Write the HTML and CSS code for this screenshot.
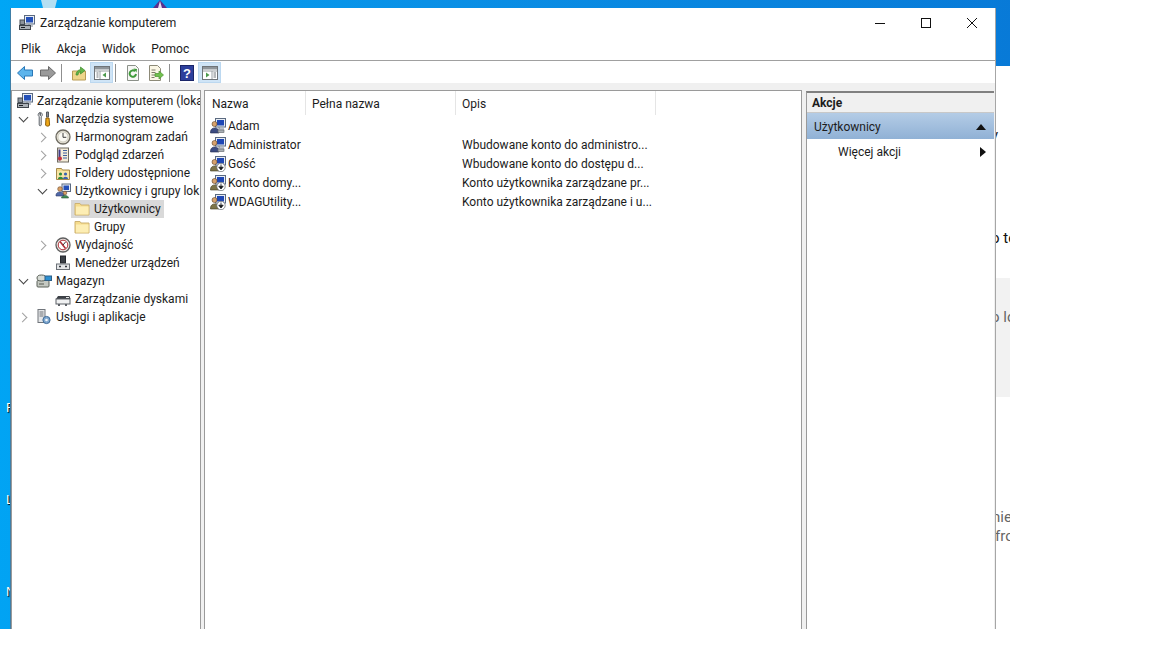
FILE: index.html
```html
<!DOCTYPE html>
<html lang="pl">

<head>
    <meta charset="UTF-8">
    <meta name="viewport" content="width=device-width, initial-scale=1.0">
    <title>Zarządzanie komputerem</title>

    <link rel="stylesheet" href="styles.css">
</head>

<body>
    <svg class="defs" width="0" height="0">
        <symbol id="i-computer" viewBox="0 0 16 16">
            <rect x="5.5" y="0.5" width="10" height="8.5" fill="#e8edf4" stroke="#5b6a80" />
            <rect x="7" y="2" width="7" height="5.5" fill="#2450b8" />
            <path d="M10 9v2h4" fill="none" stroke="#7a8494" />
            <rect x="1" y="5" width="4.5" height="4.5" fill="#8d949c" stroke="#454c55" />
            <rect x="0.5" y="10.5" width="11" height="4" fill="#aab0b6" stroke="#3e444b" />
            <path d="M2 12.5h4" stroke="#1c2026" />
        </symbol>
        <symbol id="i-tools" viewBox="0 0 16 16">
            <path d="M4 1.5c-2 .5-2.5 3-.8 4.2V14c0 1 2 1 2 0V5.7C7 4.5 6.500 2 4.600 1.500v3h-.6z" fill="#f0f1f2" stroke="#5c6167" />
            <path d="M10.500 1h2v5h-2z" fill="#8a8f96" stroke="#55595f" />
            <path d="M10 7h3l.6 7c0 1.500-4 1.500-4 0z" fill="#f0a818" stroke="#8a5c08" />
        </symbol>
        <symbol id="i-clock" viewBox="0 0 16 16">
            <circle cx="8" cy="8" r="7" fill="#e6e3d8" stroke="#6d6a60" stroke-width="1.3" />
            <circle cx="8" cy="8" r="5" fill="#fbfaf4" stroke="#b9b5a5" stroke-width=".6" />
            <path d="M8 4v4.300h3.300" fill="none" stroke="#3e3e3e" />
        </symbol>
        <symbol id="i-log" viewBox="0 0 16 16">
            <rect x="2.5" y="1" width="11" height="14" fill="#f4ecd8" stroke="#6f6a60" />
            <path d="M8 3.500h4M8 6h4M8 8.500h4M8 11h4" stroke="#4060a0" />
            <path d="M4.500 2.500v11" stroke="#403c8a" stroke-width="2" />
            <circle cx="5" cy="11.5" r="2" fill="#c4303a" />
        </symbol>
        <symbol id="i-shared" viewBox="0 0 16 16">
            <path d="M1.500 3.500h5l1 1.500h7v9.500h-13z" fill="#f2d98a" stroke="#a5894a" />
            <rect x="2" y="6" width="12" height="8" fill="#f7e5a5" />
            <circle cx="5.5" cy="9" r="1.6" fill="#2f8a3a" />
            <path d="M3 14c0-3 5-3 5 0z" fill="#2f8a3a" />
            <circle cx="10.5" cy="9" r="1.6" fill="#3a62b0" />
            <path d="M8 14c0-3 5-3 5 0z" fill="#3a62b0" />
        </symbol>
        <symbol id="i-groups" viewBox="0 0 16 16">
            <rect x="7" y="1" width="8.5" height="7.5" fill="#e8edf4" stroke="#5b6a80" />
            <rect x="8.5" y="2.5" width="5.5" height="4.5" fill="#2450b8" />
            <circle cx="5" cy="6" r="2.3" fill="#d9a066" stroke="#6e4a28" stroke-width=".6" />
            <path d="M1 12c0-4 8-4 8 0v1H1z" fill="#5068a8" stroke="#2c3a68" stroke-width=".6" />
            <circle cx="10" cy="10" r="1.8" fill="#d9a066" stroke="#6e4a28" stroke-width=".6" />
            <path d="M6.500 15c0-3.500 7-3.500 7 0z" fill="#3f8a52" stroke="#28563a" stroke-width=".6" />
        </symbol>
        <symbol id="i-folder" viewBox="0 0 16 16">
            <path d="M1 2.500h5l1 1.500h8v10H1z" fill="#f6dc8c" stroke="#cdb272" />
            <path d="M2 5.500h12.500v8H2z" fill="#fdeeb4" />
        </symbol>
        <symbol id="i-perf" viewBox="0 0 16 16">
            <circle cx="8" cy="8" r="7" fill="#eceae6" stroke="#5f5f5f" stroke-width="1.3" />
            <circle cx="8" cy="8" r="4.8" fill="#fff" stroke="#b03038" />
            <path d="M5 4.500l5.500 7" stroke="#b03038" stroke-width="1.6" />
            <path d="M8 8l2.500-3" stroke="#333" />
        </symbol>
        <symbol id="i-device" viewBox="0 0 16 16">
            <rect x="5.5" y="1" width="5" height="7" fill="#3a3f46" stroke="#24272c" />
            <rect x="1.5" y="9" width="13" height="5.5" fill="#e4e6e8" stroke="#6b7076" />
            <path d="M4 11.500h2M10 11.500h2" stroke="#33373c" stroke-width="1.5" />
        </symbol>
        <symbol id="i-storage" viewBox="0 0 16 16">
            <rect x="1" y="7.5" width="12" height="6.5" rx="1" fill="#c5c9c2" stroke="#5a6058" />
            <ellipse cx="5.5" cy="5" rx="4.5" ry="3" fill="#d7dbd5" stroke="#5a6058" />
            <rect x="9" y="3" width="6.5" height="4.5" fill="#2d8fd0" stroke="#2c5f88" />
            <path d="M3 11h5" stroke="#54594f" />
        </symbol>
        <symbol id="i-disk" viewBox="0 0 16 16">
            <path d="M1 8l2-3h11.500l1 3z" fill="#3c4046" />
            <rect x="1" y="8" width="14" height="5" fill="#f0f1f2" stroke="#5d6167" />
            <path d="M4 13v2M11 13v2" stroke="#5d6167" stroke-width="2" />
            <path d="M11 6.500h3" stroke="#e8e8e8" />
        </symbol>
        <symbol id="i-services" viewBox="0 0 16 16">
            <rect x="2" y="0.5" width="7" height="13" fill="#e4e6e8" stroke="#70757b" />
            <path d="M3.500 3h4M3.500 5h4M3.500 7h4" stroke="#70757b" />
            <circle cx="10.5" cy="11" r="3.6" fill="#7fa8d0" stroke="#3d6a98" />
            <circle cx="10.5" cy="11" r="1.3" fill="#f4f6f8" />
        </symbol>
        <symbol id="i-user" viewBox="0 0 16 16">
            <rect x="5.5" y="0.5" width="10" height="8.5" fill="#e8edf4" stroke="#5b6a80" />
            <rect x="7" y="2" width="7" height="5.5" fill="#1f47b4" />
            <path d="M9 9v2h5" fill="none" stroke="#7a8494" />
            <circle cx="4.5" cy="6" r="2.5" fill="#d6a16c" stroke="#5e4226" stroke-width=".6" />
            <path d="M.5 14c0-5.500 8.500-5.500 8.500 0v1H.5z" fill="#3c4c82" stroke="#20294e" stroke-width=".6" />
            <rect x="8" y="12" width="6" height="2.5" fill="#aab0b6" stroke="#5d6167" stroke-width=".6" />
        </symbol>
        <symbol id="i-user-off" viewBox="0 0 16 16">
            <rect x="5.5" y="0.5" width="10" height="8.5" fill="#e8edf4" stroke="#5b6a80" />
            <rect x="7" y="2" width="7" height="5.5" fill="#1f47b4" />
            <circle cx="4.5" cy="6" r="2.5" fill="#d6a16c" stroke="#5e4226" stroke-width=".6" />
            <path d="M.5 14c0-5.500 8.500-5.500 8.500 0v1H.5z" fill="#7d7448" stroke="#3f3a20" stroke-width=".6" />
            <circle cx="11" cy="11.5" r="4.2" fill="#fff" stroke="#5d6167" stroke-width=".7" />
            <path d="M11 8.500v4M8.800 11.200l2.200 2.800 2.200-2.800z" fill="#17191c" stroke="#17191c" stroke-width=".8" />
        </symbol>
    </svg>

    <div class="desktop">
        <svg class="desk-icon bin" viewBox="0 0 18 8"><path d="M1 0h16l-2 8H3z" fill="#b4dff2" /></svg>
        <svg class="desk-icon orb" viewBox="0 0 20 8"><path d="M10 0l7 8H3z" fill="#5b2f8a" /><path d="M10 1l2 7H8z" fill="#e6e0f0" /></svg>
        <span class="desk-label label-f">F</span>
        <span class="desk-label label-l">L</span>
        <span class="desk-label label-n">N</span>
    </div>

    <div class="back-window">
        <p class="frag frag-y">y</p>
        <p class="frag frag-te">o te</p>
        <div class="grey-block"><p class="frag frag-lo">o lo</p></div>
        <p class="frag frag-nie">nie</p>
        <p class="frag frag-fro">fro</p>
    </div>

    <div class="window">
        <div class="titlebar">
            <svg class="icon title-icon"><use href="#i-computer" /></svg>
            <span class="title-text">Zarządzanie komputerem</span>
            <div class="caption">
                <svg class="cap-btn" viewBox="0 0 46 30"><path d="M18 15.500h10" stroke="#111" /></svg>
                <svg class="cap-btn" viewBox="0 0 46 30"><rect x="18.5" y="10.5" width="9" height="9" fill="none" stroke="#111" /></svg>
                <svg class="cap-btn" viewBox="0 0 46 30"><path d="M18 10l10 10M28 10l-10 10" stroke="#111" /></svg>
            </div>
        </div>

        <div class="menubar">
            <span>Plik</span>
            <span>Akcja</span>
            <span>Widok</span>
            <span>Pomoc</span>
        </div>

        <div class="toolbar">
            <div class="tool">
                <svg class="icon" viewBox="0 0 16 16"><path d="M.5 8L7.500 1.500V5h8v6h-8v3.500z" fill="#5cb4ec" stroke="#2a78b8" /></svg>
            </div>
            <div class="tool">
                <svg class="icon" viewBox="0 0 16 16"><path d="M15.500 8L8.500 1.500V5h-8v6h8v3.500z" fill="#9a9a9a" stroke="#6a6a6a" /></svg>
            </div>
            <div class="sep"></div>
            <div class="tool">
                <svg class="icon" viewBox="0 0 16 16">
                    <path d="M1.500 6h13v9h-13z" fill="#efd58a" stroke="#b99c55" />
                    <path d="M5 10c0-3 2-5 4.500-5.500V2L14 5.500 9.500 9V6.500C8 7 7 8.500 7 10z" fill="#62b548" stroke="#3d8a2c" stroke-width=".7" />
                </svg>
            </div>
            <div class="tool on">
                <svg class="icon" viewBox="0 0 16 16">
                    <rect x=".5" y="1.5" width="15" height="13" fill="#fff" stroke="#6f7478" />
                    <path d="M1 2h14v2.500H1z" fill="#8f959a" />
                    <path d="M1 6h14M6 6v8" stroke="#9aa0a4" />
                    <path d="M2.500 8h2M2.500 10h2M2.500 12h2" stroke="#6f7478" />
                    <path d="M12 7.500v5L8.500 10z" fill="#4c9a4c" />
                </svg>
            </div>
            <div class="sep"></div>
            <div class="tool">
                <svg class="icon" viewBox="0 0 16 16">
                    <path d="M2.500.5h8l3 3v12h-11z" fill="#f6f7f4" stroke="#8b9089" />
                    <path d="M11 9a3.200 3.200 0 1 1-1-2.800" fill="none" stroke="#3f9a3a" stroke-width="2" />
                    <path d="M8.500 3.500l3.500.5-.5 3.500z" fill="#3f9a3a" />
                </svg>
            </div>
            <div class="tool">
                <svg class="icon" viewBox="0 0 16 16">
                    <path d="M1.500.5h8l3 3v12h-11z" fill="#fbf7e6" stroke="#8d8a78" />
                    <path d="M3.500 5h4M3.500 7.500h4M3.500 10h4M3.500 12.500h3" stroke="#7d7a68" />
                    <path d="M7 8.500h4V6l4.500 4-4.500 4v-2.500H7z" fill="#72c04e" stroke="#4b9430" stroke-width=".7" />
                </svg>
            </div>
            <div class="sep"></div>
            <div class="tool">
                <svg class="icon" viewBox="0 0 16 16">
                    <rect x="1.5" y="0.5" width="13" height="15" fill="#2d3f9c" stroke="#1a2568" />
                    <text x="8" y="13" text-anchor="middle" class="help-mark">?</text>
                </svg>
            </div>
            <div class="tool on">
                <svg class="icon" viewBox="0 0 16 16">
                    <rect x=".5" y="1.5" width="15" height="13" fill="#fff" stroke="#6f7478" />
                    <path d="M1 2h14v2.500H1z" fill="#8f959a" />
                    <path d="M1 6h14M10 6v8" stroke="#9aa0a4" />
                    <path d="M11.500 8h2.500M11.500 10h2.500M11.500 12h2.500" stroke="#6f7478" />
                    <path d="M4 7.500v5L7.500 10z" fill="#4c9a4c" />
                </svg>
            </div>
        </div>

        <div class="panes">
            <div class="pane tree">
                <div class="tree-row"><svg class="icon"><use href="#i-computer" /></svg><span class="lbl">Zarządzanie komputerem (loka</span></div>
                <div class="tree-row lv1"><i class="chev open"></i><svg class="icon"><use href="#i-tools" /></svg><span class="lbl">Narzędzia systemowe</span></div>
                <div class="tree-row lv2"><i class="chev"></i><svg class="icon"><use href="#i-clock" /></svg><span class="lbl">Harmonogram zadań</span></div>
                <div class="tree-row lv2"><i class="chev"></i><svg class="icon"><use href="#i-log" /></svg><span class="lbl">Podgląd zdarzeń</span></div>
                <div class="tree-row lv2"><i class="chev"></i><svg class="icon"><use href="#i-shared" /></svg><span class="lbl">Foldery udostępnione</span></div>
                <div class="tree-row lv2"><i class="chev open"></i><svg class="icon"><use href="#i-groups" /></svg><span class="lbl">Użytkownicy i grupy lok</span></div>
                <div class="tree-row lv3"><span class="picked"><svg class="icon"><use href="#i-folder" /></svg><span class="lbl">Użytkownicy</span></span></div>
                <div class="tree-row lv3"><span class="unpicked"><svg class="icon"><use href="#i-folder" /></svg><span class="lbl">Grupy</span></span></div>
                <div class="tree-row lv2"><i class="chev"></i><svg class="icon"><use href="#i-perf" /></svg><span class="lbl">Wydajność</span></div>
                <div class="tree-row lv2"><i class="chev none"></i><svg class="icon"><use href="#i-device" /></svg><span class="lbl">Menedżer urządzeń</span></div>
                <div class="tree-row lv1"><i class="chev open"></i><svg class="icon"><use href="#i-storage" /></svg><span class="lbl">Magazyn</span></div>
                <div class="tree-row lv2"><i class="chev none"></i><svg class="icon"><use href="#i-disk" /></svg><span class="lbl">Zarządzanie dyskami</span></div>
                <div class="tree-row lv1"><i class="chev"></i><svg class="icon"><use href="#i-services" /></svg><span class="lbl">Usługi i aplikacje</span></div>
            </div>

            <div class="pane list">
                <div class="list-head">
                    <div class="col-h name">Nazwa</div>
                    <div class="col-h full">Pełna nazwa</div>
                    <div class="col-h desc">Opis</div>
                </div>
                <div class="list-row">
                    <div class="cell name"><svg class="icon"><use href="#i-user" /></svg>Adam</div>
                    <div class="cell full"></div>
                    <div class="cell desc"></div>
                </div>
                <div class="list-row">
                    <div class="cell name"><svg class="icon"><use href="#i-user" /></svg>Administrator</div>
                    <div class="cell full"></div>
                    <div class="cell desc">Wbudowane konto do administro...</div>
                </div>
                <div class="list-row">
                    <div class="cell name"><svg class="icon"><use href="#i-user-off" /></svg>Gość</div>
                    <div class="cell full"></div>
                    <div class="cell desc">Wbudowane konto do dostępu d...</div>
                </div>
                <div class="list-row">
                    <div class="cell name"><svg class="icon"><use href="#i-user-off" /></svg>Konto domy...</div>
                    <div class="cell full"></div>
                    <div class="cell desc">Konto użytkownika zarządzane pr...</div>
                </div>
                <div class="list-row">
                    <div class="cell name"><svg class="icon"><use href="#i-user-off" /></svg>WDAGUtility...</div>
                    <div class="cell full"></div>
                    <div class="cell desc">Konto użytkownika zarządzane i u...</div>
                </div>
            </div>

            <div class="pane actions">
                <div class="act-head">Akcje</div>
                <div class="act-group"><span>Użytkownicy</span><i class="tri-up"></i></div>
                <div class="act-item"><span>Więcej akcji</span><i class="tri-right"></i></div>
            </div>
        </div>
    </div>
</body>

</html>
```

FILE: styles.css
```css
* {
    box-sizing: border-box;
}

html,
body {
    margin: 0;
    height: 648px;
    overflow: hidden;
    background: #fff;
}

body {
    position: relative;
    font-family: Roboto, "Noto Sans", sans-serif;
    font-size: 12px;
    color: #1c1c1c;
}

.defs {
    position: absolute;
}

.icon {
    display: block;
    flex: none;
    width: 16px;
    height: 16px;
}

/* desktop behind the window */
.desktop {
    position: absolute;
    left: 0;
    top: 0;
    width: 1010px;
    height: 629px;
    background: linear-gradient(95deg, #00a6f5 0%, #0a90e6 40%, #0878d6 100%);
}

.desk-icon {
    position: absolute;
    top: 0;
    height: 8px;
}

.bin {
    left: 40px;
    width: 18px;
}

.orb {
    left: 150px;
    width: 20px;
}

.desk-label {
    position: absolute;
    left: 6px;
    color: #fff;
    font-family: "Liberation Sans", sans-serif;
    font-size: 13px;
    line-height: 14px;
    text-shadow: 1px 1px 1px #000;
}

.label-f {
    top: 401px;
}

.label-l {
    top: 493px;
}

.label-n {
    top: 585px;
}

.back-window {
    position: absolute;
    left: 996px;
    top: 66px;
    width: 14px;
    height: 563px;
    overflow: hidden;
    background: #fff;
}

.frag {
    margin: 0;
    height: 20px;
    line-height: 20px;
    font-size: 15px;
    white-space: nowrap;
    margin-left: -5px;
}

.frag-y {
    margin-top: 59px;
    color: #222;
}

.frag-te {
    margin-top: 83px;
    color: #111;
}

.grey-block {
    margin-top: 30px;
    height: 119px;
    padding-top: 29px;
    background: #f2f2f2;
}

.frag-lo {
    color: #666;
}

.frag-nie {
    margin-top: 110px;
    margin-left: -4px;
    color: #666;
}

.frag-fro {
    margin-top: -1px;
    margin-left: -1px;
    color: #666;
}

/* main window */
.window {
    position: absolute;
    left: 10px;
    top: 8px;
    width: 986px;
    height: 621px;
    display: flex;
    flex-direction: column;
    overflow: hidden;
    background: #fff;
    border-left: 1px solid #3f7ea6;
    border-right: 1px solid #a6a6a6;
}

.titlebar {
    display: flex;
    align-items: center;
    height: 30px;
    padding-left: 8px;
}

.title-text {
    margin-left: 5px;
}

.caption {
    display: flex;
    margin-left: auto;
}

.cap-btn {
    display: block;
    width: 46px;
    height: 30px;
}

.menubar {
    display: flex;
    gap: 16px;
    align-items: center;
    height: 23px;
    padding: 0 0 1px 10px;
    border-bottom: 1px solid #a0a0a0;
}

.toolbar {
    display: flex;
    align-items: flex-end;
    height: 22px;
    padding-left: 2px;
}

.tool {
    display: flex;
    justify-content: center;
    align-items: center;
    width: 23px;
    height: 21px;
}

.tool.on {
    background: #cfe4f6;
    border: 1px solid #bcd8f0;
}

.sep {
    width: 1px;
    height: 18px;
    margin: 0 5px 1px 2px;
    background: #8f8f8f;
}

.help-mark {
    fill: #fff;
    font-family: "Liberation Sans", sans-serif;
    font-size: 13px;
    font-weight: 700;
}

.panes {
    flex: 1;
    display: flex;
    padding: 7px 0 0 0;
    background: #f0f0f0;
    min-height: 0;
}

.pane {
    height: 640px;
    background: #fff;
    border: 1px solid #9a9a9a;
}

/* tree */
.tree {
    width: 190px;
    padding-top: 1px;
    overflow: hidden;
}

.tree-row {
    display: flex;
    align-items: center;
    height: 18px;
    padding-left: 5px;
    white-space: nowrap;
}

.tree-row .lbl {
    margin-left: 4px;
}

.lv1 {
    padding-left: 5px;
}

.lv2 {
    padding-left: 24px;
}

.lv3 {
    padding-left: 59px;
}

.chev {
    flex: none;
    position: relative;
    width: 19px;
    height: 18px;
}

.chev::after {
    content: "";
    position: absolute;
    left: 2px;
    top: 5.5px;
    width: 6px;
    height: 6px;
    border-top: 1.3px solid #a0a0a0;
    border-right: 1.3px solid #a0a0a0;
    transform: rotate(45deg);
}

.chev.open::after {
    left: 3px;
    top: 3.5px;
    border-color: #444;
    transform: rotate(135deg);
}

.chev.none::after {
    display: none;
}

.picked,
.unpicked {
    display: flex;
    align-items: center;
    width: 93px;
    height: 18px;
    padding-left: 3px;
}

.picked {
    background: #d9d9d9;
}

/* list */
.list {
    width: 598px;
    margin-left: 3px;
}

.list-head {
    display: flex;
    height: 24px;
    margin-bottom: 1px;
}

.col-h {
    display: flex;
    align-items: center;
    padding: 1px 0 0 6px;
    border-right: 1px solid #e5e5e5;
}

.col-h.name {
    padding-left: 7px;
}

.name {
    width: 101px;
}

.full {
    width: 150px;
}

.desc {
    width: 200px;
}

.list-row {
    display: flex;
    height: 19px;
}

.cell {
    display: flex;
    align-items: center;
    white-space: nowrap;
}

.cell.name {
    padding-left: 5px;
}

.cell.name .icon {
    margin-right: 2px;
}

.cell.desc {
    padding-left: 6px;
}

/* actions */
.actions {
    width: 188px;
    margin: 1px 0 0 4px;
    border-top: 2px solid #808080;
    border-right: 0;
}

.act-head {
    display: flex;
    align-items: center;
    height: 20px;
    padding-left: 5px;
    background: #f0f0f0;
    border-bottom: 1px solid #c8c8c8;
    font-weight: 700;
}

.act-group {
    display: flex;
    align-items: center;
    justify-content: space-between;
    height: 26px;
    padding: 1px 8px 0 7px;
    background: linear-gradient(#b4cce6, #90b1d5);
}

.tri-up {
    width: 0;
    height: 0;
    border: 5.5px solid transparent;
    border-top: 0;
    border-bottom: 6px solid #111;
}

.act-item {
    display: flex;
    align-items: center;
    justify-content: space-between;
    height: 24px;
    padding: 1px 8px 0 31px;
}

.tri-right {
    width: 0;
    height: 0;
    border: 5px solid transparent;
    border-right: 0;
    border-left: 6px solid #111;
}
```
